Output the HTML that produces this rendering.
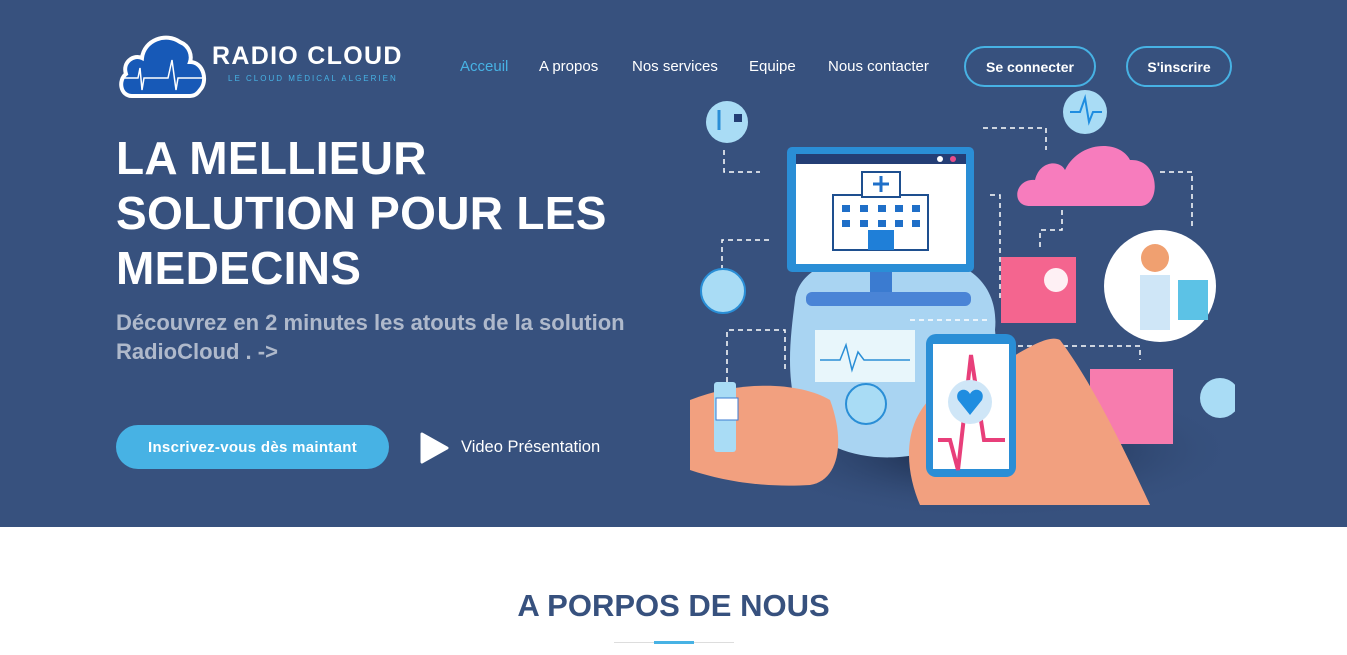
<!DOCTYPE html>
<html><head><meta charset="utf-8"><style>
*{margin:0;padding:0;box-sizing:border-box}
body{width:1347px;height:655px;overflow:hidden;background:#fff;font-family:"Liberation Sans",sans-serif}
#hero{position:absolute;left:0;top:0;width:1347px;height:527px;background:#37517e}
.nav{position:absolute;top:58px;font-size:15px;color:#fff}
.btn{position:absolute;top:46px;height:41px;border:2px solid #47b2e4;border-radius:21px;color:#fff;font-size:14px;font-weight:bold;display:flex;align-items:center;justify-content:center}
h1{position:absolute;left:116px;top:131px;font-size:46px;line-height:55px;color:#fff;font-weight:bold;letter-spacing:0.3px}
.sub{position:absolute;left:116px;top:308px;font-size:22px;line-height:29px;color:rgba(255,255,255,0.6);font-weight:bold}
.cta{position:absolute;left:116px;top:425px;width:273px;height:44px;border-radius:22px;background:#47b2e4;color:#fff;font-size:15px;font-weight:bold;display:flex;align-items:center;justify-content:center;letter-spacing:.3px}
h2{position:absolute;left:0;width:1347px;top:588px;text-align:center;font-size:31px;color:#37517e;font-weight:bold}
</style></head><body>
<div id="hero">
<svg style="position:absolute;left:118px;top:32px" width="90" height="68" viewBox="0 0 90 68">
<path d="M14 64 C2 64 0 48 8 42 C4 30 16 22 24 26 C26 8 48 0 62 10 C72 14 74 24 72 30 C86 30 90 50 82 58 C78 64 74 64 70 64 Z" fill="#1759b7" stroke="#fff" stroke-width="4"/>
<path d="M6 46 L20 46 L22 36 L24 58 L26 46 L50 46 L54 28 L58 58 L60 46 L84 46" fill="none" stroke="#fff" stroke-width="1.5"/>
</svg>
<div style="position:absolute;left:212px;top:42px;color:#fff;font-size:25px;font-weight:bold;letter-spacing:1.3px">RADIO CLOUD</div>
<div style="position:absolute;left:228px;top:74px;color:#47b2e4;font-size:8px;letter-spacing:2px">LE CLOUD MÉDICAL ALGERIEN</div>
<div class="nav" style="left:460px;color:#47b2e4">Acceuil</div>
<div class="nav" style="left:539px">A propos</div>
<div class="nav" style="left:632px">Nos services</div>
<div class="nav" style="left:749px">Equipe</div>
<div class="nav" style="left:828px">Nous contacter</div>
<div class="btn" style="left:964px;width:132px">Se connecter</div>
<div class="btn" style="left:1126px;width:106px">S'inscrire</div>
<h1>LA MELLIEUR<br>SOLUTION POUR LES<br>MEDECINS</h1>
<div class="sub">Découvrez en 2 minutes les atouts de la solution<br>RadioCloud . -&gt;</div>
<div class="cta">Inscrivez-vous dès maintant</div>
<svg style="position:absolute;left:419px;top:431px" width="30" height="34"><path d="M3 3 L28 17 L3 31 Z" fill="#fff" stroke="#fff" stroke-width="3" stroke-linejoin="round"/></svg>
<div style="position:absolute;left:461px;top:438px;color:#fff;font-size:16.5px">Video Présentation</div>
<svg style="position:absolute;left:690px;top:90px" width="545" height="425" viewBox="690 90 545 425">
<defs><radialGradient id="sh" cx="0.5" cy="0.5" r="0.5"><stop offset="0" stop-color="#0d1a33"/><stop offset="1" stop-color="#37517e" stop-opacity="0"/></radialGradient></defs>
<ellipse cx="990" cy="450" rx="250" ry="70" fill="url(#sh)"/>
<path d="M795 300 C800 260 860 250 900 260 C960 250 1000 280 995 330 C1000 380 990 420 960 440 C900 470 830 460 800 420 C785 380 790 340 795 300Z" fill="#a9d4f2"/>
<g fill="none" stroke="#fff" stroke-width="1.5" stroke-dasharray="5 4"><path d="M724 150 V172 H760"/><path d="M722 270 V240 H770"/><path d="M727 400 V330 H785 V370"/><path d="M983 128 H1046 V150"/><path d="M1160 172 H1192 V230"/><path d="M1062 210 V230 H1040 V248"/><path d="M990 195 H1000 V300"/><path d="M1000 346 H1140 V360"/><path d="M910 320 H990"/></g>
<circle cx="727" cy="122" r="21" fill="#a9dcf5"/><path d="M719 110 V130" stroke="#2a8ed6" stroke-width="3"/><path d="M734 114 h8 v8 h-8z" fill="#243e75"/>
<circle cx="1085" cy="112" r="22" fill="#a9dcf5"/><path d="M1070 112 H1080 L1085 98 L1089 122 L1093 112 H1102" stroke="#1f8de0" stroke-width="2" fill="none"/>
<circle cx="723" cy="291" r="22" fill="#a9dcf5" stroke="#2a8ed6" stroke-width="2"/><circle cx="1220" cy="398" r="20" fill="#a9dcf5"/>
<rect x="787" y="147" width="187" height="125" rx="5" fill="#2a8ed6"/><rect x="796" y="154" width="170" height="110" fill="#fff"/><rect x="796" y="154" width="170" height="10" fill="#243e75"/><circle cx="940" cy="159" r="3" fill="#fff"/><circle cx="953" cy="159" r="3" fill="#e84d8a"/>
<rect x="833" y="195" width="95" height="55" fill="#fff" stroke="#1e4f8f" stroke-width="2"/><rect x="862" y="172" width="38" height="25" fill="#fff" stroke="#1e4f8f" stroke-width="2"/><path d="M881 176 v16 M873 184 h16" stroke="#1f6fc8" stroke-width="3"/><rect x="868" y="230" width="26" height="20" fill="#1f7fd8"/>
<g fill="#1f6fc8"><rect x="842" y="205" width="8" height="7"/><rect x="860" y="205" width="8" height="7"/><rect x="878" y="205" width="8" height="7"/><rect x="895" y="205" width="8" height="7"/><rect x="912" y="205" width="8" height="7"/><rect x="842" y="220" width="8" height="7"/><rect x="860" y="220" width="8" height="7"/><rect x="878" y="220" width="8" height="7"/><rect x="895" y="220" width="8" height="7"/><rect x="912" y="220" width="8" height="7"/></g>
<rect x="870" y="272" width="22" height="22" fill="#3b7bd0"/><rect x="806" y="292" width="165" height="14" rx="6" fill="#4a84d6"/>
<rect x="815" y="330" width="100" height="52" fill="#e8f6fb"/><path d="M820 360 H840 L846 345 L852 370 L858 352 L864 360 H910" stroke="#2a8ed6" fill="none" stroke-width="1.5"/>
<path d="M1030 206 C1010 206 1015 178 1035 180 C1040 160 1060 160 1065 170 C1080 140 1120 140 1130 160 C1160 158 1162 206 1140 206Z" fill="#f77cbd"/>
<rect x="1001" y="257" width="75" height="66" fill="#f4658f"/><circle cx="1056" cy="280" r="12" fill="#fff" opacity=".9"/>
<circle cx="1160" cy="286" r="56" fill="#fff"/><circle cx="1155" cy="258" r="14" fill="#f0a070"/><rect x="1140" y="275" width="30" height="55" fill="#cfe6f7"/><rect x="1178" y="280" width="30" height="40" fill="#5cc2e6"/>
<rect x="1090" y="369" width="83" height="75" fill="#f77cae"/>
<path d="M940 390 C990 380 1040 330 1060 340 C1090 380 1120 440 1150 505 H920 C905 470 900 420 940 390Z" fill="#f2a07f"/>
<path d="M690 400 C740 380 800 382 830 400 C845 440 840 480 810 485 C760 488 720 480 690 470Z" fill="#f2a07f"/><rect x="714" y="382" width="22" height="70" rx="3" fill="#a9dcf5"/><rect x="716" y="398" width="22" height="22" fill="#fff" stroke="#3b7bd0"/>
<circle cx="866" cy="404" r="20" fill="#a9dcf5" stroke="#2a8ed6" stroke-width="2"/>
<rect x="926" y="334" width="90" height="143" rx="10" fill="#2a8ed6"/><rect x="933" y="344" width="76" height="125" fill="#fff"/><path d="M938 440 L950 440 L958 470 L971 355 L984 440 L1005 440" stroke="#e83f7a" stroke-width="4" fill="none"/><circle cx="970" cy="402" r="22" fill="#cfe6f7"/><path d="M970 415 L958 400 C954 390 966 386 970 394 C974 386 986 390 982 400Z" fill="#1f8de0"/>
</svg>
</div>
<h2>A PORPOS DE NOUS</h2>
<div style="position:absolute;left:614px;top:642px;width:120px;height:1px;background:#ddd"></div>
<div style="position:absolute;left:654px;top:641px;width:40px;height:3px;background:#47b2e4"></div>
</body></html>
